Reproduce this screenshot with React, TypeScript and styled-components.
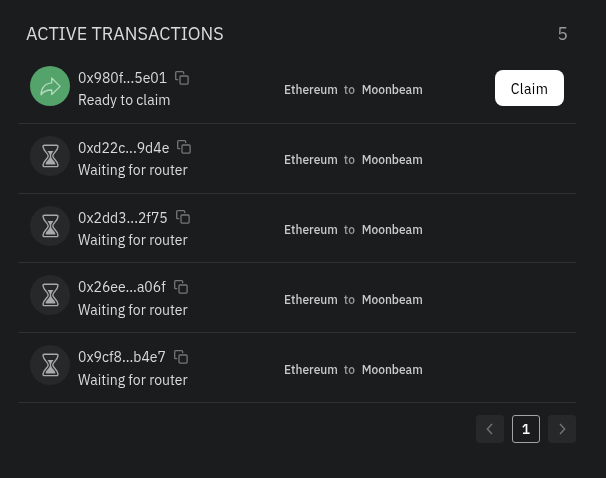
import React from "react";
import styled, { createGlobalStyle } from "styled-components";

const GlobalStyle = createGlobalStyle`
  * { box-sizing: border-box; }
  body {
    margin: 0;
    background: #1b1c1e;
    color: #dadada;
    font-family: "IBM Plex Sans", Roboto, sans-serif;
    -webkit-font-smoothing: antialiased;
  }
`;

const Panel = styled.main`
  width: 606px;
  height: 478px;
  padding: 14px 30px 0 18px;
  will-change: transform;
`;

const Header = styled.header`
  display: flex;
  align-items: center;
  justify-content: space-between;
  height: 40px;
  padding: 0 8px;
`;

const Title = styled.h1`
  margin: 0;
  font-size: 18px;
  font-weight: 400;
  line-height: 24px;
`;

const Count = styled.span`
  font-size: 18px;
  line-height: 24px;
  color: #98999b;
`;

const List = styled.ul`
  margin: 0;
  padding: 0;
  list-style: none;
`;

const Row = styled.li`
  display: grid;
  grid-template-columns: 254px 1fr auto;
  height: 69.8px;
  padding: 12px 12px 0;
  border-bottom: 1px solid #303133;
`;

const Transaction = styled.div`
  display: flex;
  gap: 8px;
`;

const StatusBadge = styled.div<{ $ready: boolean }>`
  display: flex;
  flex: none;
  align-items: center;
  justify-content: center;
  width: 40px;
  height: 40px;
  border-radius: 50%;
  background: ${(p) => (p.$ready ? "#54a36a" : "#27282a")};
`;

const Details = styled.div`
  display: flex;
  flex-direction: column;
  gap: 0.4px;
  padding-top: 1px;
  font-size: 14px;
  line-height: 22px;
`;

const HashLine = styled.div`
  display: flex;
  align-items: center;
  gap: 8px;
  height: 22px;
`;

const Status = styled.span`
  white-space: nowrap;
`;

const CopyButton = styled.button`
  display: flex;
  margin-bottom: 0.8px;
  padding: 0;
  border: 0;
  background: none;
  color: #757678;
`;

const Route = styled.div`
  display: flex;
  gap: 6px;
  padding-top: 15.4px;
  font-size: 12px;
  font-weight: 500;
  line-height: 18px;
`;

const Chain = styled.span`
  color: #cbcbcb;
`;

const Joiner = styled.span`
  margin-right: 0.7px;
  color: #9a9b9c;
`;

const ClaimButton = styled.button`
  width: 69px;
  height: 36px;
  margin-top: 4px;
  padding: 2px 0 0;
  border: 0;
  border-radius: 8px;
  background: #fff;
  color: #000;
  font: inherit;
  font-size: 14px;
  letter-spacing: 0.35px;
`;

const Pagination = styled.nav`
  display: flex;
  justify-content: flex-end;
  gap: 8px;
  padding-top: 12px;
`;

const PageButton = styled.button<{ $current?: boolean }>`
  display: flex;
  align-items: center;
  justify-content: center;
  width: 28px;
  height: 28px;
  padding: 0;
  border: 1px solid ${(p) => (p.$current ? "#a4a4a5" : "#27282a")};
  border-radius: 3px;
  background: ${(p) => (p.$current ? "transparent" : "#27282a")};
  color: ${(p) => (p.$current ? "#fff" : "#757678")};
  font: inherit;
  font-size: 14px;
  font-weight: 500;
`;

const ShareIcon = () => (
  <svg width="24" height="24" viewBox="0 0 24 24" fill="none" stroke="#b5dabf" strokeWidth="1.3" strokeLinejoin="round">
    <path d="M13.7 4 L22.1 12.4 L13.7 20.5 V16 C9.2 15.9 5.6 17.2 3 20.8 C3 14.4 6.9 9.4 13.7 8.9 Z" />
  </svg>
);

const HourglassIcon = () => (
  <svg width="24" height="24" viewBox="0 0 24 24" fill="none" stroke="#a9abaa" strokeWidth="1.4" strokeLinejoin="round">
    <path d="M6.6 1.2 H18.4 C19.8 1.2 20.1 2.1 19.9 3 C19.5 7.2 14.8 9.2 14.8 11.9 C14.8 14.6 19.5 16.6 19.9 20.8 C20.1 21.7 19.8 22.6 18.4 22.6 H6.6 C5.2 22.6 4.9 21.7 5.1 20.8 C5.5 16.6 10.2 14.6 10.2 11.9 C10.2 9.2 5.5 7.2 5.1 3 C4.9 2.1 5.2 1.2 6.6 1.2 Z" />
    <path d="M9.4 7 H15.6 C14.6 8.4 13.1 9.8 13.1 11.9 C13.1 15.2 16.9 16.8 17.4 19.7 C17.5 20.3 17.1 20.6 16.6 20.6 H8.4 C7.9 20.6 7.5 20.3 7.6 19.7 C8.1 16.8 11.9 15.2 11.9 11.9 C11.9 9.8 10.4 8.4 9.4 7 Z" fill="#a9abaa" stroke="none" />
  </svg>
);

const CopyIcon = () => (
  <svg width="14" height="14" viewBox="0 0 14 14" fill="none" stroke="currentColor" strokeWidth="1.3" strokeLinecap="round">
    <rect x="5" y="5" width="8.1" height="8.1" rx="1" />
    <path d="M2.7 8.7 H1.7 C1.1 8.7 0.7 8.3 0.7 7.7 V1.7 C0.7 1.1 1.1 0.7 1.7 0.7 H7.7 C8.3 0.7 8.7 1.1 8.7 1.7 V2.7" />
  </svg>
);

const Chevron = ({ next = false }: { next?: boolean }) => (
  <svg width="12" height="12" viewBox="0 0 12 12" fill="none" stroke="currentColor" strokeWidth="1.3">
    <path d={next ? "M4 1 L8.7 6 L4 11" : "M8 1 L3.3 6 L8 11"} />
  </svg>
);

const transactions = [
  { hash: "0x980f...5e01", ready: true },
  { hash: "0xd22c...9d4e", ready: false },
  { hash: "0x2dd3...2f75", ready: false },
  { hash: "0x26ee...a06f", ready: false },
  { hash: "0x9cf8...b4e7", ready: false },
];

export default function App() {
  return (
    <>
      <GlobalStyle />
      <Panel>
        <Header>
          <Title>ACTIVE TRANSACTIONS</Title>
          <Count>5</Count>
        </Header>
        <List>
          {transactions.map(({ hash, ready }) => (
            <Row key={hash}>
              <Transaction>
                <StatusBadge $ready={ready}>{ready ? <ShareIcon /> : <HourglassIcon />}</StatusBadge>
                <Details>
                  <HashLine>
                    <span>{hash}</span>
                    <CopyButton aria-label="Copy hash">
                      <CopyIcon />
                    </CopyButton>
                  </HashLine>
                  <Status>{ready ? "Ready to claim" : "Waiting for router"}</Status>
                </Details>
              </Transaction>
              <Route>
                <Chain>Ethereum</Chain>
                <Joiner>to</Joiner>
                <Chain>Moonbeam</Chain>
              </Route>
              {ready && <ClaimButton>Claim</ClaimButton>}
            </Row>
          ))}
        </List>
        <Pagination>
          <PageButton aria-label="Previous page">
            <Chevron />
          </PageButton>
          <PageButton $current>1</PageButton>
          <PageButton aria-label="Next page">
            <Chevron next />
          </PageButton>
        </Pagination>
      </Panel>
    </>
  );
}
